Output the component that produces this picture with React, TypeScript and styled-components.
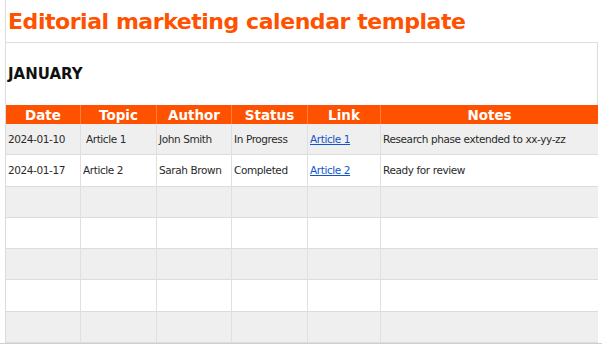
import React from "react";
import styled, { createGlobalStyle } from "styled-components";

const GlobalStyle = createGlobalStyle`
	body {
		margin: 0;
		background: #fff;
		font-family: "DejaVu Sans", "Open Sans", sans-serif;
	}
`;

type Entry = {
	date: string;
	topic: string;
	author: string;
	status: string;
	link: string;
	notes: string;
};

const entries: Entry[] = [
	{
		date: "2024-01-10",
		topic: "\u00a0Article 1",
		author: "John Smith",
		status: "In Progress",
		link: "Article 1",
		notes: "Research phase extended to xx-yy-zz",
	},
	{
		date: "2024-01-17",
		topic: "Article 2",
		author: "Sarah Brown",
		status: "Completed",
		link: "Article 2",
		notes: "Ready for review",
	},
];

const headers = ["Date", "Topic", "Author", "Status", "Link", "Notes"];
const TOTAL_ROWS = 7;

const App: React.FC = () => {
	const rows: (Entry | null)[] = [];
	for (let i = 0; i < TOTAL_ROWS; i++) {
		rows.push(entries[i] || null);
	}

	return (
		<>
			<GlobalStyle />
			<Sheet>
				<TitleBar>
					<Title>Editorial marketing calendar template</Title>
				</TitleBar>
				<MonthBlock>
					<Month>JANUARY</Month>
				</MonthBlock>
				<Grid>
					{headers.map((h) => (
						<HeadCell key={h}>{h}</HeadCell>
					))}
					{rows.map((row, index) => {
						const shaded = index % 2 === 0;
						if (!row) {
							return headers.map((h) => (
								<Cell key={`${index}-${h}`} $shaded={shaded} />
							));
						}
						return (
							<React.Fragment key={index}>
								<Cell $shaded={shaded}>{row.date}</Cell>
								<Cell $shaded={shaded}>{row.topic}</Cell>
								<Cell $shaded={shaded}>{row.author}</Cell>
								<Cell $shaded={shaded}>{row.status}</Cell>
								<Cell $shaded={shaded}>
									<SheetLink href="#">{row.link}</SheetLink>
								</Cell>
								<Cell $shaded={shaded}>{row.notes}</Cell>
							</React.Fragment>
						);
					})}
				</Grid>
				<BottomRule />
			</Sheet>
		</>
	);
};

export default App;

const Sheet = styled.div`
	width: 602px;
	height: 346px;
	overflow: hidden;
`;

const TitleBar = styled.div`
	height: 42px;
	margin-left: 5px;
	border-left: 1px solid #dedede;
	display: flex;
	align-items: center;
	padding-left: 2px;
	box-sizing: border-box;
`;

const Title = styled.h1`
	margin: 0;
	color: #ff5200;
	font-size: 22px;
	font-weight: 700;
	letter-spacing: -0.45px;
	white-space: nowrap;
`;

const MonthBlock = styled.div`
	height: 63px;
	width: 593px;
	margin-left: 5px;
	border-left: 1px solid #dedede;
	border-top: 1px solid #dedede;
	border-right: 1px solid #dedede;
	box-sizing: border-box;
	display: flex;
	align-items: center;
	padding-left: 2px;
`;

const Month = styled.div`
	color: #111;
	font-size: 15px;
	font-weight: 700;
`;

const Grid = styled.div`
	width: 593px;
	margin-left: 5px;
	display: grid;
	grid-template-columns: 74px 76px 75px 76px 73px 218px;
	grid-template-rows: 19px repeat(7, 31.3px);
	border-left: 1px solid #dadada;
	border-right: 1px solid #dadada;
	box-sizing: border-box;
`;

const HeadCell = styled.div`
	background: #ff5200;
	color: #fff;
	font-size: 13.5px;
	font-weight: 700;
	display: flex;
	align-items: center;
	justify-content: center;
	border-left: 1px solid rgba(255, 255, 255, 0.25);
	&:first-child {
		border-left: none;
	}
`;

const Cell = styled.div<{ $shaded: boolean }>`
	background: ${(p) => (p.$shaded ? "#efefef" : "#ffffff")};
	color: #2a2a2a;
	font-size: 10.5px;
	letter-spacing: -0.4px;
	display: flex;
	align-items: center;
	padding-left: 2px;
	border-left: 1px solid #e0e0e0;
	border-bottom: 1px solid #dcdcdc;
	white-space: nowrap;
	overflow: hidden;
	box-sizing: border-box;
	&:nth-child(6n + 1) {
		border-left: none;
	}
`;

const SheetLink = styled.a`
	color: #1155cc;
	text-decoration: underline;
`;

const BottomRule = styled.div`
	border-top: 1px solid #d0d0d0;
`;
